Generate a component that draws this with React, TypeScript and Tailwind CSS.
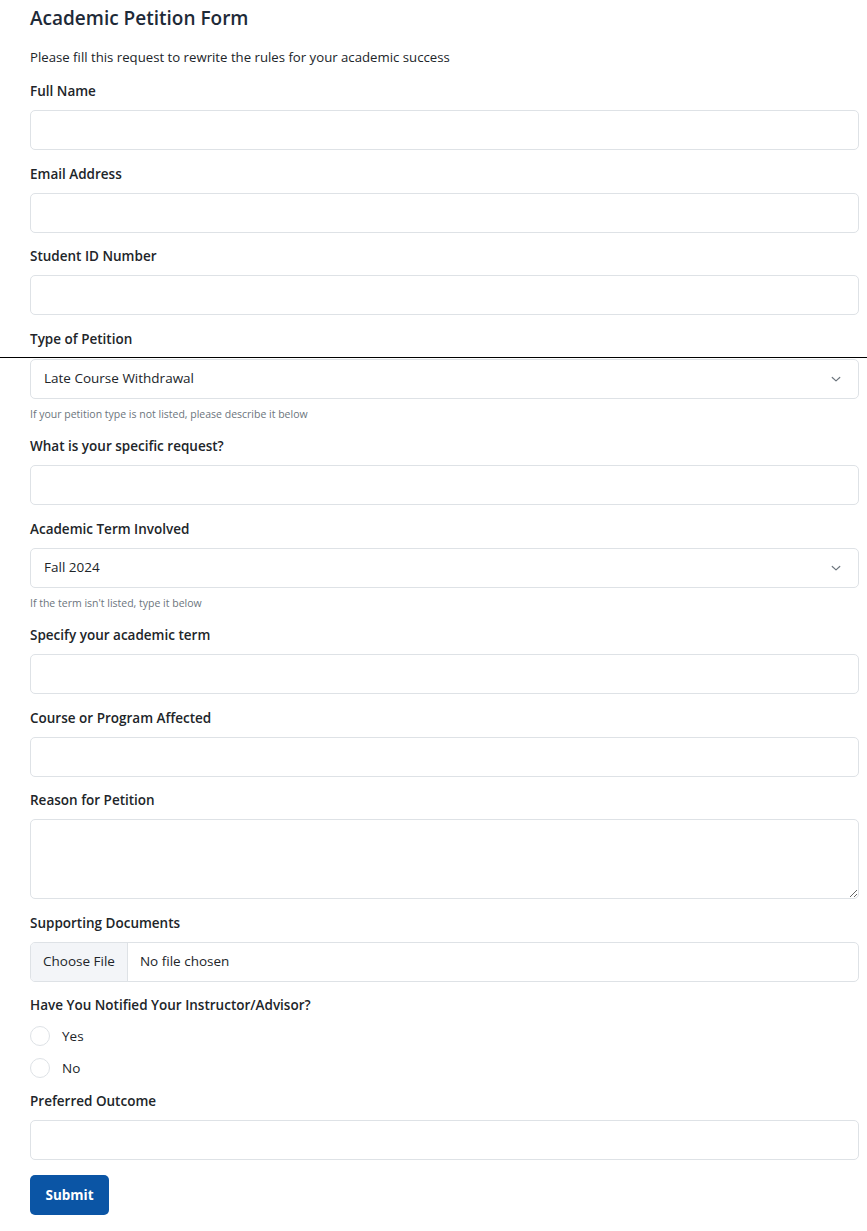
import React from 'react';

const font = { fontFamily: '"Open Sans", "Noto Sans", sans-serif' };

function Label({ children }: { children: React.ReactNode }) {
  return <label className="block h-[21px] leading-[21px] text-[13.5px] font-semibold text-[#212529] mb-[8px]">{children}</label>;
}

function TextInput() {
  return <input type="text" className="block w-full h-[40px] rounded-[5px] border border-[#dee2e6] bg-white px-3 text-[13.5px] outline-none" />;
}

function Chevron() {
  return (
    <svg width="12" height="12" viewBox="0 0 16 16" fill="none" stroke="#6c757d" strokeWidth="1.6" strokeLinecap="round" strokeLinejoin="round">
      <path d="M3 6l5 4.5L13 6" />
    </svg>
  );
}

function Select({ value }: { value: string }) {
  return (
    <div className="flex items-center justify-between h-[40px] rounded-[5px] border border-[#dee2e6] bg-white pl-[13px] pr-[16px] text-[13.5px] text-[#212529]">
      <span>{value}</span>
      <Chevron />
    </div>
  );
}

function Help({ children }: { children: React.ReactNode }) {
  return <div className="mt-[6px] h-[18px] leading-[18px] text-[10.5px] text-[#6c757d]">{children}</div>;
}

function Field({ label, children, last }: { label: string; children: React.ReactNode; last?: boolean }) {
  return (
    <div className={last ? 'mb-[15px]' : 'mb-[13.5px]'}>
      <Label>{label}</Label>
      {children}
    </div>
  );
}

function Radio({ label }: { label: string }) {
  return (
    <div className="flex items-center h-[32px] gap-[12px]">
      <span className="block w-[20px] h-[20px] rounded-full border border-[#dee2e6] bg-white" />
      <span className="text-[13.5px] text-[#212529]">{label}</span>
    </div>
  );
}

export default function App() {
  return (
    <div className="bg-white min-h-[1231px] text-[#212529]" style={font}>
      <div className="pl-[30px] pr-[8px] pt-[5px]">
        <h1 className="text-[19px] font-semibold leading-[26px] text-[#1e2a38]">Academic Petition Form</h1>
        <p className="mt-[16px] mb-[14px] text-[13.2px] leading-[20px]">Please fill this request to rewrite the rules for your academic success</p>

        <Field label="Full Name"><TextInput /></Field>
        <Field label="Email Address"><TextInput /></Field>
        <Field label="Student ID Number"><TextInput /></Field>

        <div className="mb-[13.5px]">
          <label className="block h-[21px] leading-[21px] text-[13.5px] font-semibold text-[#212529]">Type of Petition</label>
          <hr className="-ml-[30px] -mr-[8px] mt-[7px] mb-[1px] border-0 h-[1px] bg-black" />
          <Select value="Late Course Withdrawal" />
          <Help>If your petition type is not listed, please describe it below</Help>
        </div>

        <Field label="What is your specific request?"><TextInput /></Field>

        <div className="mb-[13.5px]">
          <Label>Academic Term Involved</Label>
          <Select value="Fall 2024" />
          <Help>If the term isn't listed, type it below</Help>
        </div>

        <Field label="Specify your academic term"><TextInput /></Field>
        <Field label="Course or Program Affected"><TextInput /></Field>
        <Field label="Reason for Petition">
          <textarea className="block w-full h-[80px] rounded-[5px] border border-[#dee2e6] bg-white px-3 py-2 text-[13.5px] outline-none" />
        </Field>
        <Field label="Supporting Documents">
          <div className="flex items-center h-[40px] rounded-[5px] border border-[#dee2e6] bg-white overflow-hidden text-[13.5px]">
            <span className="flex items-center h-full px-[12px] bg-[#f3f5f8] border-r border-[#dee2e6] text-[#212529]">Choose File</span>
            <span className="pl-[12px] text-[#212529]">No file chosen</span>
          </div>
        </Field>

        <div className="mb-[7px]">
          <div className="h-[21px] leading-[21px] text-[13.5px] font-semibold">Have You Notified Your Instructor/Advisor?</div>
          <div className="mt-[4px]">
            <Radio label="Yes" />
            <Radio label="No" />
          </div>
        </div>

        <Field label="Preferred Outcome" last><TextInput /></Field>

        <button className="h-[40px] w-[79px] rounded-[5px] bg-[#0b55a5] text-white text-[13.5px] font-bold">Submit</button>
      </div>
    </div>
  );
}
